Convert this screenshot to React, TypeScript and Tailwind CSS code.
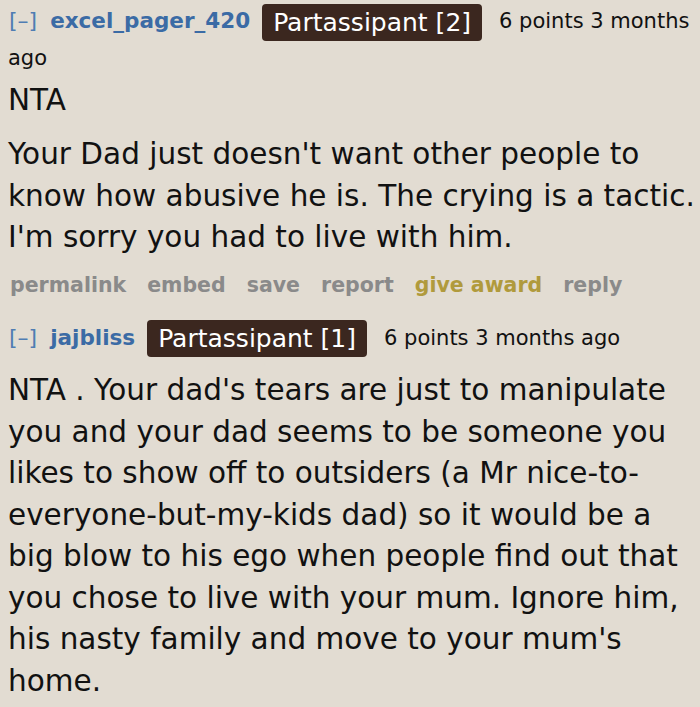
import React from 'react';

const font = { fontFamily: '"DejaVu Sans", Verdana, sans-serif' };

type Comment = {
  user: string;
  flair: string;
  meta: string;
  paras: string[];
  gap: string;
  actions?: boolean;
};

const comments: Comment[] = [
  {
    user: 'excel_pager_420',
    flair: 'Partassipant [2]',
    meta: '6 points 3 months ago',
    paras: [
      'NTA',
      "Your Dad just doesn't want other people to know how abusive he is. The crying is a tactic. I'm sorry you had to live with him.",
    ],
    gap: 'mt-[4px]',
    actions: true,
  },
  {
    user: 'jajbliss',
    flair: 'Partassipant [1]',
    meta: '6 points 3 months ago',
    paras: [
      "NTA . Your dad's tears are just to manipulate you and your dad seems to be someone you likes to show off to outsiders (a Mr nice-to-everyone-but-my-kids dad) so it would be a big blow to his ego when people find out that you chose to live with your mum. Ignore him, his nasty family and move to your mum's home.",
    ],
    gap: 'mt-[13px]',
  },
];

const CommentBlock: React.FC<{ c: Comment; first?: boolean }> = ({ c, first }) => (
  <div className={first ? '' : 'mt-[20px]'}>
    <div className="text-[21px] leading-[35px] text-[#111]">
      <span className="text-[#4f7db3] text-[22px] ml-[1px] mr-[13px]">[–]</span>
      <span className="text-[#3b6ba5] font-bold text-[21.5px]">{c.user}</span>
      <span className="inline-block align-middle bg-[#3b271f] text-white text-[25px] leading-[37px] px-[11px] rounded-[4px] ml-[12px] mr-[17px]">
        {c.flair}
      </span>
      {c.meta}
    </div>
    <div className="text-[29.5px] leading-[41.5px] text-[#111]">
      {c.paras.map((p, i) => (
        <p key={i} className={i === 0 ? c.gap : 'mt-[13px]'}>{p}</p>
      ))}
    </div>
    {c.actions && (
      <div className="flex gap-[21px] text-[20.5px] leading-[30px] font-bold text-[#8a8a8a] mt-[11px] pl-[2px]">
        <span>permalink</span>
        <span>embed</span>
        <span>save</span>
        <span>report</span>
        <span className="text-[#b09a3c]">give award</span>
        <span>reply</span>
      </div>
    )}
  </div>
);

export default function App() {
  return (
    <div className="w-[700px] h-[707px] overflow-hidden bg-[#e2dcd2] pl-[8px] pt-[3px]" style={font}>
      {comments.map((c, i) => (
        <CommentBlock key={i} c={c} first={i === 0} />
      ))}
    </div>
  );
}
